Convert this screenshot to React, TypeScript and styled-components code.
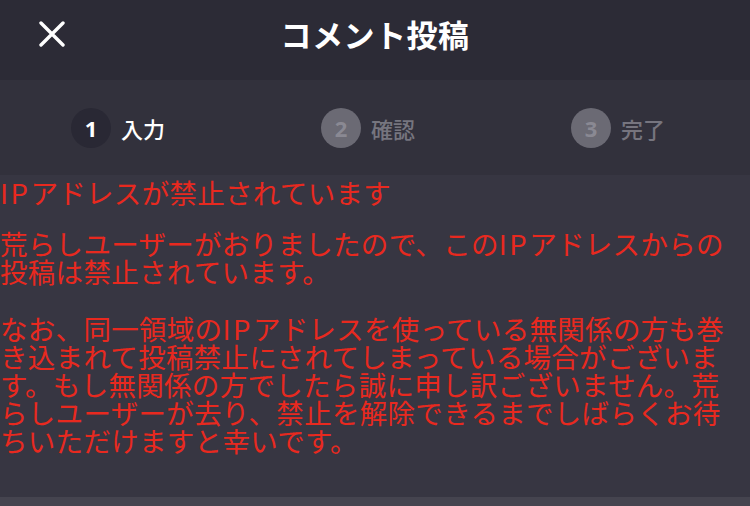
import styled, { createGlobalStyle } from "styled-components";

const GlobalStyle = createGlobalStyle`
  html, body {
    margin: 0;
    padding: 0;
    background: #373642;
  }
  body {
    font-family: "Noto Sans CJK JP", "Noto Sans", sans-serif;
  }
`;

const Page = styled.div`
  width: 750px;
  height: 506px;
  display: flex;
  flex-direction: column;
  background: #373642;
  overflow: hidden;
`;

const Header = styled.header`
  height: 80px;
  flex-shrink: 0;
  display: grid;
  grid-template-columns: 100px 1fr 100px;
  align-items: center;
  background: #2c2b36;
`;

const CloseButton = styled.button`
  border: 0;
  background: none;
  padding: 0;
  margin-left: 38px;
  width: 28px;
  height: 28px;
  display: flex;
  align-items: center;
  justify-content: center;
  margin-top: -12px;
`;

const Title = styled.h1`
  margin: 0;
  margin-top: -14px;
  text-align: center;
  color: #ffffff;
  font-size: 31px;
  font-weight: 700;
  letter-spacing: 0.5px;
`;

const Steps = styled.nav`
  height: 95px;
  flex-shrink: 0;
  display: grid;
  grid-template-columns: repeat(3, 1fr);
  align-items: center;
  background: #32313c;
`;

const Step = styled.div<{ $active?: boolean }>`
  display: flex;
  align-items: center;
  gap: 10px;
  padding-left: 71px;
  color: ${(p) => (p.$active ? "#ffffff" : "#76757f")};
  font-size: 22px;
  font-weight: 500;
`;

const StepNum = styled.span<{ $active?: boolean }>`
  width: 40px;
  height: 40px;
  border-radius: 50%;
  display: flex;
  align-items: center;
  justify-content: center;
  background: ${(p) => (p.$active ? "#292834" : "#6b6a74")};
  color: ${(p) => (p.$active ? "#ffffff" : "#8a8993")};
  font-family: "Noto Sans", sans-serif;
  font-size: 22px;
  font-weight: 700;
`;

const Notice = styled.section`
  flex: 1;
  padding-top: 3px;
  color: #e8291f;
  font-size: 27.5px;
  line-height: 28px;
  letter-spacing: 0.3px;
`;

const Para = styled.p<{ $gap: number }>`
  margin: 0 0 ${(p) => p.$gap}px;
`;

const Latin = styled.span`
  letter-spacing: 2.5px;
`;

const BottomBar = styled.div`
  height: 9px;
  flex-shrink: 0;
  background: #45444f;
`;

export default function App() {
  return (
    <Page>
      <GlobalStyle />
      <Header>
        <CloseButton aria-label="閉じる">
          <svg width="26" height="26" viewBox="0 0 26 26">
            <path
              d="M2 2 L24 24 M24 2 L2 24"
              stroke="#ffffff"
              strokeWidth="3.4"
              strokeLinecap="round"
            />
          </svg>
        </CloseButton>
        <Title>コメント投稿</Title>
        <div />
      </Header>
      <Steps>
        <Step $active>
          <StepNum $active>1</StepNum>
          入力
        </Step>
        <Step>
          <StepNum>2</StepNum>
          確認
        </Step>
        <Step>
          <StepNum>3</StepNum>
          完了
        </Step>
      </Steps>
      <Notice>
        <Para $gap={23}>
          <Latin>IP</Latin>アドレスが禁止されています
        </Para>
        <Para $gap={29}>
          荒らしユーザーがおりましたので、この<Latin>IP</Latin>アドレスからの
          <br />
          投稿は禁止されています。
        </Para>
        <Para $gap={0}>
          なお、同一領域の<Latin>IP</Latin>アドレスを使っている無関係の方も巻
          <br />
          き込まれて投稿禁止にされてしまっている場合がございま
          <br />
          す。もし無関係の方でしたら誠に申し訳ございません。荒
          <br />
          らしユーザーが去り、禁止を解除できるまでしばらくお待
          <br />
          ちいただけますと幸いです。
        </Para>
      </Notice>
      <BottomBar />
    </Page>
  );
}
